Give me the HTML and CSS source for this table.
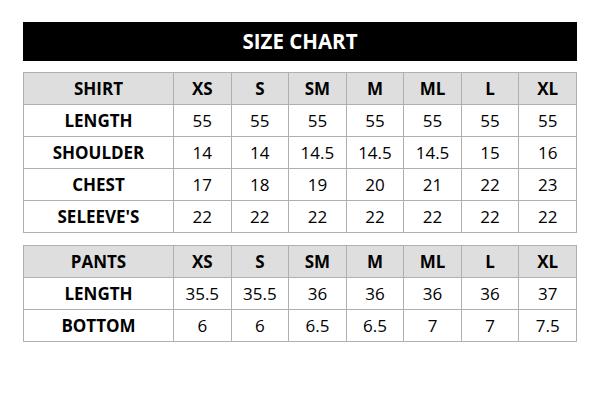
FILE: index.html
```html
<!DOCTYPE html>
<html>
<head>
<meta charset="utf-8">
<link rel="stylesheet" href="styles.css">
</head>
<body>
<div class="page">
  <div class="title">SIZE CHART</div>
  <table class="chart">
    <colgroup><col class="c-label"><col><col><col><col><col><col><col></colgroup>
    <tr class="head"><th>SHIRT</th><th>XS</th><th>S</th><th>SM</th><th>M</th><th>ML</th><th>L</th><th>XL</th></tr>
    <tr><th>LENGTH</th><td>55</td><td>55</td><td>55</td><td>55</td><td>55</td><td>55</td><td>55</td></tr>
    <tr><th>SHOULDER</th><td>14</td><td>14</td><td>14.5</td><td>14.5</td><td>14.5</td><td>15</td><td>16</td></tr>
    <tr><th>CHEST</th><td>17</td><td>18</td><td>19</td><td>20</td><td>21</td><td>22</td><td>23</td></tr>
    <tr><th>SELEEVE'S</th><td>22</td><td>22</td><td>22</td><td>22</td><td>22</td><td>22</td><td>22</td></tr>
  </table>
  <table class="chart">
    <colgroup><col class="c-label"><col><col><col><col><col><col><col></colgroup>
    <tr class="head"><th>PANTS</th><th>XS</th><th>S</th><th>SM</th><th>M</th><th>ML</th><th>L</th><th>XL</th></tr>
    <tr><th>LENGTH</th><td>35.5</td><td>35.5</td><td>36</td><td>36</td><td>36</td><td>36</td><td>37</td></tr>
    <tr><th>BOTTOM</th><td>6</td><td>6</td><td>6.5</td><td>6.5</td><td>7</td><td>7</td><td>7.5</td></tr>
  </table>
</div>
</body>
</html>
```

FILE: styles.css
```css
html, body {
  margin: 0;
  padding: 0;
  background: #ffffff;
}
.page {
  width: 554px;
  padding: 22px 23px 0;
  font-family: "Open Sans", "Liberation Sans", sans-serif;
  color: #000;
}
.title {
  height: 39px;
  background: #000;
  color: #fff;
  font-weight: 700;
  font-size: 20.5px;
  line-height: 39px;
  text-align: center;
}
.chart {
  width: 554px;
  border-collapse: collapse;
  table-layout: fixed;
  margin-top: 11px;
}
.chart + .chart {
  margin-top: 12px;
}
.c-label {
  width: 150px;
}
.chart th, .chart td {
  border: 1px solid #b0b0b0;
  height: 31px;
  padding: 0;
  text-align: center;
  font-size: 17px;
  line-height: 31px;
}
.chart th {
  font-weight: 700;
}
.chart td {
  font-weight: 400;
}
.head th {
  background: #dedede;
}
```
